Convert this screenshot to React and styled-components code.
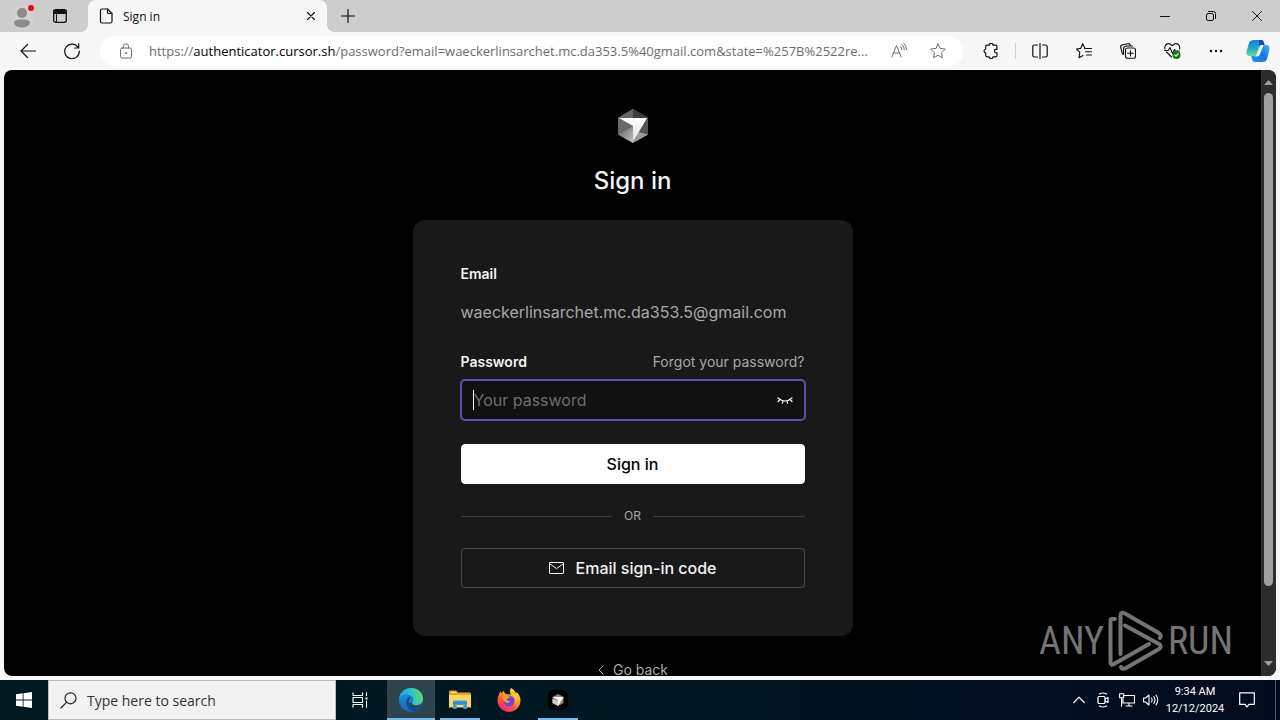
import React from "react";
import styled, { createGlobalStyle } from "styled-components";

const GlobalStyle = createGlobalStyle`
  * {
    box-sizing: border-box;
  }

  body {
    margin: 0;
    overflow: hidden;
  }

  button {
    padding: 0;
    border: 0;
    background: none;
    color: inherit;
    font: inherit;
  }

  svg {
    display: block;
    flex: none;
  }
`;

const Desktop = styled.div`
  height: 100vh;
  display: flex;
  flex-direction: column;
  background: #f7f7f7;
  font-family: "Open Sans", "Noto Sans", sans-serif;
`;

/* browser chrome */

const TabStrip = styled.header`
  height: 32px;
  flex: none;
  display: flex;
  background: #cdcdcd;
  color: #111;
`;

const StripTools = styled.div`
  width: 88px;
  display: flex;
  align-items: center;
  gap: 8px;
  padding-left: 7px;
`;

const StripButton = styled.button`
  width: 30px;
  height: 32px;
  display: flex;
  align-items: center;
  justify-content: center;
`;

const Tab = styled.div`
  position: relative;
  width: 239px;
  display: flex;
  align-items: center;
  gap: 10px;
  padding: 0 0 0 11px;
  background: #f7f7f7;
  border-radius: 8px 8px 0 0;
  font-size: 12px;

  &::before,
  &::after {
    content: "";
    position: absolute;
    bottom: 0;
    width: 8px;
    height: 8px;
  }

  &::before {
    left: -8px;
    background: radial-gradient(circle at 0 0, #cdcdcd 8px, #f7f7f7 8px);
  }

  &::after {
    right: -8px;
    background: radial-gradient(circle at 100% 0, #cdcdcd 8px, #f7f7f7 8px);
  }
`;

const TabTitle = styled.span`
  flex: 1;
`;

const NewTab = styled(StripButton)`
  margin-left: 6px;
`;

const WindowButtons = styled.div`
  margin-left: auto;
  display: flex;
`;

const WindowButton = styled(StripButton)`
  width: 46px;
`;

const Toolbar = styled.nav`
  height: 38px;
  flex: none;
  display: flex;
  align-items: center;
  gap: 12px;
  padding: 0 8px 0 12px;
  color: #111;
`;

const ToolButton = styled.button`
  width: ${(p) => (p.$narrow ? 28 : 32)}px;
  height: 32px;
  flex: none;
  display: flex;
  align-items: center;
  justify-content: center;
`;

const Separator = styled.div`
  width: 1px;
  height: 16px;
  margin: 0 -4px;
  background: #cfcfcf;
`;

const AddressBar = styled.div`
  flex: 1;
  min-width: 0;
  height: 30px;
  display: flex;
  align-items: center;
  padding: 0 9px 0 10px;
  border-radius: 15px;
  background: #fff;
  color: #6c6c6c;
`;

const Url = styled.div`
  flex: 1;
  min-width: 0;
  margin: 0 8px 0 7px;
  overflow: hidden;
  white-space: nowrap;
  font-size: 13px;
`;

const Host = styled.span`
  color: #000;
`;

const BarButton = styled(ToolButton)`
  margin-left: ${(p) => (p.$spaced ? 7 : 0)}px;
`;

/* page */

const Viewport = styled.div`
  flex: 1;
  min-height: 0;
  display: flex;
  margin: 0 4px 4px;
  border-radius: 8px;
  overflow: hidden;
  background: #000;
`;

const Page = styled.main`
  flex: 1;
  min-width: 0;
  overflow: hidden;
  display: flex;
  flex-direction: column;
  align-items: center;
  padding-top: 39px;
  color: #f4f4f4;
  font-family: Inter, sans-serif;
`;

const Title = styled.h1`
  flex: none;
  margin: 22px 0 23px;
  font-size: 24px;
  line-height: 32px;
  font-weight: 500;
`;

const Card = styled.form`
  width: 440px;
  max-width: 100%;
  flex: none;
  display: flex;
  flex-direction: column;
  padding: 44px 48px 48px;
  border-radius: 12px;
  background: #191919;
`;

const Label = styled.label`
  font-size: 14px;
  line-height: 20px;
  font-weight: 600;
  color: #f4f4f4;
`;

const EmailValue = styled.output`
  margin: 16px 0 28px;
  font-size: 16px;
  line-height: 24px;
  color: #a8a8a8;
`;

const LabelRow = styled.div`
  display: flex;
  justify-content: space-between;
`;

const MutedLink = styled.a`
  display: flex;
  align-items: center;
  gap: 8px;
  font-size: 14px;
  line-height: 20px;
  color: #a8a8a8;
  text-decoration: none;
`;

const Field = styled.div`
  height: 40px;
  display: flex;
  align-items: center;
  margin: 8px 0 24px;
  padding: 0 11px;
  border: 1px solid #5f4fae;
  border-radius: 4px;
  box-shadow: 0 0 0 1px #5f4fae;
  background: #111;
`;

const Caret = styled.span`
  width: 1px;
  height: 20px;
  background: #f4f4f4;
`;

const PasswordInput = styled.input`
  flex: 1;
  min-width: 0;
  height: 38px;
  padding: 0;
  border: 0;
  outline: 0;
  background: transparent;
  color: #f4f4f4;
  font: 16px Inter, sans-serif;

  &::placeholder {
    color: #6c6c6c;
    opacity: 1;
  }
`;

const ActionButton = styled.button`
  height: 40px;
  display: flex;
  align-items: center;
  justify-content: center;
  gap: 12px;
  border: 1px solid ${(p) => (p.$primary ? "#fff" : "#484848")};
  border-radius: 4px;
  background: ${(p) => (p.$primary ? "#fff" : "transparent")};
  color: ${(p) => (p.$primary ? "#000" : "#f4f4f4")};
  font-size: 16px;
  font-weight: 500;
`;

const Divider = styled.div`
  display: flex;
  align-items: center;
  gap: 12px;
  margin: 22px 0;
  font-size: 12px;
  line-height: 20px;
  color: #a8a8a8;

  &::before,
  &::after {
    content: "";
    flex: 1;
    height: 1px;
    background: #3a3a3a;
  }
`;

const GoBack = styled(MutedLink)`
  flex: none;
  margin-top: 24px;
`;

const Scrollbar = styled.div`
  width: 15px;
  display: flex;
  flex-direction: column;
  align-items: center;
  padding: 10px 0;
  background: #2c2c2c;
`;

const ScrollTrack = styled.div`
  flex: 1;
  padding: 8px 0;
`;

const Thumb = styled.div`
  width: 9px;
  height: 88%;
  border-radius: 5px;
  background: #9f9f9f;
`;

const Watermark = styled.div`
  position: absolute;
  right: 47px;
  bottom: 48px;
  display: flex;
  align-items: center;
  gap: 4px;
  color: #747474;
  font-family: "Roboto Condensed", "Liberation Sans Narrow", sans-serif;
  font-size: 38px;
  line-height: 62px;
`;

/* taskbar */

const Taskbar = styled.footer`
  height: 40px;
  flex: none;
  display: flex;
  background: linear-gradient(90deg, #001a22, #001722 45%, #020a1e);
  color: #fff;
`;

const TaskButton = styled.button`
  position: relative;
  width: 48px;
  display: flex;
  align-items: center;
  justify-content: center;
  background: ${(p) => (p.$active ? "#2f454d" : "transparent")};

  &::after {
    content: "";
    position: absolute;
    bottom: 0;
    width: ${(p) => (p.$active ? 48 : 40)}px;
    height: ${(p) => (p.$open ? 2 : 0)}px;
    background: #76b9ed;
  }
`;

const SearchBox = styled.label`
  width: 288px;
  display: flex;
  align-items: center;
  gap: 10px;
  padding-left: 11px;
  border: 1px solid #bcbcbc;
  background: #f2f2f2;
  color: #222;
`;

const SearchInput = styled.input`
  flex: 1;
  min-width: 0;
  padding: 0;
  border: 0;
  outline: 0;
  background: transparent;
  font: 14px "Open Sans", sans-serif;

  &::placeholder {
    color: #333;
    opacity: 1;
  }
`;

const Apps = styled.div`
  display: flex;
  gap: 1px;
  margin-left: 3px;
`;

const Tray = styled.div`
  margin-left: auto;
  display: flex;
`;

const TrayButton = styled.button`
  width: ${(p) => (p.$wide ? 40 : 24)}px;
  display: flex;
  align-items: center;
  justify-content: center;
`;

const Clock = styled.time`
  width: 64px;
  display: flex;
  flex-direction: column;
  align-items: center;
  justify-content: center;
  font: 11px/17px Roboto, sans-serif;
  white-space: nowrap;
`;

const ShowDesktop = styled.button`
  width: 5px;
  margin-left: 8px;
  border-left: 1px solid #4b5563;
`;

/* thin outline icon used by most of the chrome */
const Line = ({ w = 18, h = w, sw = 1, children }) => (
  <svg
    width={w}
    height={h}
    viewBox={`0 0 ${w} ${h}`}
    fill="none"
    stroke="currentColor"
    strokeWidth={sw}
    strokeLinecap="round"
    strokeLinejoin="round"
    aria-hidden="true"
  >
    {children}
  </svg>
);

const CubeIcon = () => (
  <svg width="30" height="34" viewBox="0 0 30 34" aria-hidden="true">
    <defs>
      <linearGradient id="cubeLeft" x1="0" y1="0" x2="1" y2="1">
        <stop offset="0" stopColor="#5a5a5a" />
        <stop offset="1" stopColor="#c5c5c5" />
      </linearGradient>
      <linearGradient id="cubeFace" x1="0" y1="0" x2="0" y2="1">
        <stop offset="0" stopColor="#fff" />
        <stop offset="1" stopColor="#ddd" />
      </linearGradient>
    </defs>
    <path d="M15 0 30 8.500v17L15 34 0 25.500V8.500z" fill="#555" />
    <path d="M15 0v9H0z" fill="#666" />
    <path d="M15 0v9h15z" fill="#3c3c3c" />
    <path d="M0 8.500 15 17 0 25.500z" fill="#6a6a6a" />
    <path d="M0 25.500 15 17v17z" fill="url(#cubeLeft)" />
    <path d="M30 8.500v17L20 26z" fill="#555" />
    <path d="M30 25.500 15 34l5-11z" fill="#9a9a9a" />
    <path d="M1 9h28L15 33V17z" fill="url(#cubeFace)" />
  </svg>
);

const CopilotIcon = () => (
  <svg width="24" height="24" viewBox="0 0 24 24" aria-hidden="true">
    <defs>
      <linearGradient id="copA" x1="0" y1="0" x2="0" y2="1">
        <stop offset="0" stopColor="#1782d8" />
        <stop offset=".5" stopColor="#18a9cf" />
        <stop offset="1" stopColor="#6bdc94" />
      </linearGradient>
      <linearGradient id="copB" x1="1" y1="0" x2="0" y2="1">
        <stop offset="0" stopColor="#2fc0f5" />
        <stop offset=".5" stopColor="#1a72e4" />
        <stop offset="1" stopColor="#1f9bf5" />
      </linearGradient>
    </defs>
    <path d="M8 1h7c2 0 2.500 1 3 3l.5 2H16c-2 0-3 1-3.500 3l-1.500 5c-.6 2-1.500 3-3.500 3H4c-3 0-4-2-3.300-5l2-7C3.500 2 5 1 8 1z" fill="url(#copA)" />
    <path d="M13 1h2c2 0 2.500 1 3 3l.5 2H16l-3 1z" fill="#174ea6" />
    <path d="M16 23H9c-2 0-2.500-1-3-3l-.7-3H8c2 0 3-1 3.500-3L13 9c.6-2 1.500-3 3.500-3H20c3 0 4 2 3.300 5l-2 8c-.8 3-2.300 4-5.300 4z" fill="url(#copB)" />
    <path d="M14 7c1-1 2-1 3.500-1L14 15c-.8 2-2 2.500-4 2.500H8c2 0 3-1.500 3.500-3.500z" fill="#fff" />
  </svg>
);

const EdgeIcon = () => (
  <svg width="24" height="24" viewBox="0 0 24 24" aria-hidden="true">
    <defs>
      <linearGradient id="edgeTop" x1="0" y1=".5" x2="1" y2=".4">
        <stop offset="0" stopColor="#219bdc" />
        <stop offset=".5" stopColor="#2cbfd3" />
        <stop offset="1" stopColor="#63dc62" />
      </linearGradient>
      <linearGradient id="edgeLow" x1="0" y1="0" x2="0" y2="1">
        <stop offset="0" stopColor="#1b9de2" />
        <stop offset="1" stopColor="#1765b8" />
      </linearGradient>
    </defs>
    <circle cx="12" cy="12" r="12" fill="url(#edgeLow)" />
    <path d="M0 11C.8 4.500 6 0 12 0c7 0 12 5 12 10.500 0 4-3 6.500-6.500 6.500-3 0-4.500-1-4.500-2 0-.7 1.300-1.400 1.300-3.400C14.300 8.500 11 6.500 7.500 6.500 4 6.500 1.500 8 0 11z" fill="url(#edgeTop)" />
    <path d="M11 8c-3 1.500-4.300 4.500-3.700 8 .7 4 4.200 7.500 8.700 7.200 2.500-1 4.700-2.700 6-5-2 1-4 1.300-6 1-4-.5-6.500-3.200-6.200-6.200.1-1 .8-2 1.800-2.700z" fill="#124f92" />
    <path d="M13.200 14.500c-.8 1.700 1 3 4 3 2.300 0 4.300-.8 5.500-2.200.8.7.3 1.700-.7 2.900-4 3-10.500 1.800-11.600-3z" fill="#2f454d" />
  </svg>
);

const FolderIcon = () => (
  <svg width="22" height="20" viewBox="0 0 22 20" aria-hidden="true">
    <path d="M0 2c0-1 .4-1.500 1.500-1.500H7l2 2h11.500c1 0 1.500.5 1.500 1.500v3H0z" fill="#e9a520" />
    <path d="M0 5h22v12.500H0z" fill="#ffd768" />
    <path d="M2 2.500h4.500" stroke="#fff0bd" />
    <path d="M4 19v-7c0-1 .5-1.500 1.500-1.500h11c1 0 1.500.5 1.500 1.500v7h-3.500v-4h-7v4z" fill="#3d9bdb" />
    <path d="M4 13h14" stroke="#287bbd" />
  </svg>
);

const FirefoxIcon = () => (
  <svg width="24" height="24" viewBox="0 0 24 24" aria-hidden="true">
    <defs>
      <linearGradient id="fox" x1=".85" y1="0" x2=".2" y2="1">
        <stop offset="0" stopColor="#fff04a" />
        <stop offset=".35" stopColor="#ffaa20" />
        <stop offset=".65" stopColor="#ff5a36" />
        <stop offset="1" stopColor="#e7188a" />
      </linearGradient>
    </defs>
    <path d="M14 0c3 1.500 4.500 4 5 5.500.6-.2.500-1 .3-2C22 6 23.500 9 23.500 12.500 23.500 19 18 24 12 24S.5 19 .5 12.500C.5 9 2 6 3.500 3c.2 1 .5 1.800 1 2.300C5.500 4 6 3.500 7 2.800c0 1.500.7 2.500 2 3.200l5 .5C12.500 4.500 12.500 2 14 0z" fill="url(#fox)" />
    <circle cx="12" cy="13" r="5.500" fill="#7140d8" />
    <path d="M5 8c2-1.500 4-1.300 5.500 0l2.500.4c-.5 1.600-3.200 1.600-3.500 3.100.9 1.500 2.300 2 4 1.300-.8 2-3.500 2.700-5.500 1.200C6 12.500 5 10 5 8z" fill="#ff9c26" />
    <path d="M14 6c3.500 1 5.500 5 4 9 1.300-1 2-3 1.700-5.500C19 6.500 16 5 14 6z" fill="#ffd33c" />
  </svg>
);

const CursorAppIcon = () => (
  <svg width="20" height="20" viewBox="0 0 20 20" aria-hidden="true">
    <rect width="20" height="20" rx="5" fill="#000" />
    <path d="M10 4l5.500 3v6L10 16l-5.500-3V7z" fill="#888" />
    <path d="M4.500 7h11L10 16v-6z" fill="#fff" />
    <path d="M4.500 9 10 11v5l-5.500-3z" fill="#c9c9c9" />
  </svg>
);

const PlayLogo = () => (
  <svg
    width="56"
    height="62"
    viewBox="0 0 56 62"
    fill="none"
    stroke="currentColor"
    strokeWidth="4"
    strokeLinejoin="round"
    strokeLinecap="round"
    aria-hidden="true"
  >
    <path d="M7 9H4Q2.500 9 2.500 11V53Q3 56 6 54L41 34" />
    <path d="M12.500 44V6Q12.500 1 17 3.500L50 22.500Q54 25 52 28" />
    <path d="M17 15.500 51 34Q54.500 36.500 51 39L18 58Q14 60 13 57" />
  </svg>
);

export default function App() {
  return (
    <>
      <GlobalStyle />
      <Desktop>
        <TabStrip>
          <StripTools>
            <StripButton aria-label="Profile">
              <svg width="26" height="28" viewBox="0 0 26 28" aria-hidden="true">
                <circle cx="13" cy="15" r="12" fill="#d3d0ce" />
                <circle cx="13" cy="11" r="5" fill="#8b8b8b" />
                <path d="M5 21c0-2 2-3.500 8-3.500s8 1.500 8 3.500c-1 3-4 4.500-8 4.500S6 24 5 21z" fill="#8b8b8b" />
                <circle cx="22" cy="6" r="3" fill="#e00b1c" />
              </svg>
            </StripButton>
            <StripButton aria-label="Workspaces">
              <Line w={14}>
                <rect x=".7" y=".7" width="12.600" height="12.600" rx="2" strokeWidth="1.300" />
                <path d="M1 1.500h12v3H1z" fill="currentColor" />
                <path d="M3.500 4.500v8.500" />
              </Line>
            </StripButton>
          </StripTools>
          <Tab>
            <Line w={14} h={16} sw={1.2}>
              <path d="M3 1h5.500L13 5.500V13.500q0 1.500-1.500 1.500H3q-1.500 0-1.500-1.500v-11Q1.500 1 3 1z" />
              <path d="M8.500 1v3.500q0 1 1 1H13" />
            </Line>
            <TabTitle>Sign in</TabTitle>
            <ToolButton aria-label="Close tab">
              <Line w={8} sw={1.2}>
                <path d="M.5.5l7 7M7.500.5l-7 7" />
              </Line>
            </ToolButton>
          </Tab>
          <NewTab aria-label="New tab">
            <Line w={14} sw={1.2}>
              <path d="M7 .5v13M.5 7h13" />
            </Line>
          </NewTab>
          <WindowButtons>
            <WindowButton aria-label="Minimize">
              <Line w={10}>
                <path d="M.5 5.500h9" />
              </Line>
            </WindowButton>
            <WindowButton aria-label="Restore">
              <Line w={10}>
                <rect x=".5" y="2.500" width="7" height="7" rx="1.500" />
                <path d="M2.500.5H7.500q2 0 2 2V7.500" />
              </Line>
            </WindowButton>
            <WindowButton aria-label="Close">
              <Line w={10}>
                <path d="M.5.5l9 9M9.500.5l-9 9" />
              </Line>
            </WindowButton>
          </WindowButtons>
        </TabStrip>

        <Toolbar>
          <ToolButton aria-label="Back">
            <Line w={16} sw={1.2}>
              <path d="M15.500 8H1M7.500 1.500 1 8l6.500 6.500" />
            </Line>
          </ToolButton>
          <ToolButton aria-label="Refresh">
            <Line w={16} sw={1.2}>
              <path d="M14.200 4.500A7.300 7.300 0 1 0 15.300 8M14.700.8v4.200h-4.200" />
            </Line>
          </ToolButton>
          <AddressBar>
            <ToolButton aria-label="Site information">
              <Line w={12} h={16}>
                <rect x=".5" y="5" width="11" height="10" rx="1.500" />
                <path d="M3.500 5V3.200a2.500 2.500 0 0 1 5 0V5" />
                <circle cx="6" cy="10" r=".6" fill="currentColor" />
              </Line>
            </ToolButton>
            <Url role="textbox" aria-label="Address" tabIndex={0}>
              https://<Host>authenticator.cursor.sh</Host>
              /password?email=waeckerlinsarchet.mc.da353.5%40gmail.com&amp;state=%257B%2522re...
            </Url>
            <BarButton aria-label="Read aloud">
              <Line w={16}>
                <path d="M.8 14 5.500 2.500 10.200 14M2.400 10h6.200M9.500 3.500q1.300 1.300 1.300 3.500M11 1.500q2.500 2 2.300 5.500M13 .5q2.500 2.500 2.500 6" />
              </Line>
            </BarButton>
            <BarButton $spaced aria-label="Add to favorites">
              <Line w={16}>
                <path d="M8 .8l2.200 4.600 5 .7-3.600 3.600.8 5L8 12.300l-4.400 2.400.8-5L.8 6.100l5-.7z" />
              </Line>
            </BarButton>
          </AddressBar>
          <ToolButton aria-label="Extensions">
            <Line w={16} sw={1.2}>
              <path d="M4 2.200h2.200a1.900 1.900 0 0 1 3.800 0h2.500q1.500 0 1.500 1.500v2.600h-.8a1.800 1.800 0 0 0 0 3.600h.8v2.400q0 1.500-1.500 1.500H10a1.900 1.900 0 0 1-3.800 0H4q-1.300 0-1.300-1.500v-2.200a2.100 2.100 0 0 1 0-4.100V3.700q0-1.500 1.300-1.500z" />
            </Line>
          </ToolButton>
          <Separator />
          <ToolButton aria-label="Split screen">
            <Line w={16} sw={1.2}>
              <path d="M5.500 2H2.500Q.8 2 .8 3.700v8.600Q.8 14 2.500 14h3M10.500 2h3q1.700 0 1.700 1.700v8.600q0 1.700-1.700 1.700h-3M8 .6v14.800" />
            </Line>
          </ToolButton>
          <ToolButton aria-label="Favorites">
            <Line w={16} sw={1.1}>
              <path d="M9 5.200 6.700.8 4.600 5.400.6 6l3.200 3.400L3 14.700 7 12.500M8.500 5.500h7M9.500 8.700h6M10.500 12h5" />
            </Line>
          </ToolButton>
          <ToolButton aria-label="Collections">
            <Line w={16} sw={1.1}>
              <rect x="5.500" y="5" width="10" height="10.300" rx="2" />
              <path d="M10.500 7.500v5.500M7.700 10.200h5.600M3.500 11.500Q2.500 11 2 9.500L.7 4q-.3-1.500 1-2L8 .7q1.500-.2 2 1l.5 1.300M3.500 11V6q0-3 3-3h6" />
            </Line>
          </ToolButton>
          <ToolButton aria-label="Browser essentials">
            <Line w={17} h={16} sw={1.1}>
              <path d="M1 6C0 2.500 3-.2 6 1l2.300 1.700L10.500 1c3-1.200 6 1.500 5 5M2.500 9l5 5M.7 7.500h3.500L6 4.500l2.500 6 2-4 1 1.500h4" />
              <circle cx="12.500" cy="12" r="4" fill="#107c10" stroke="none" />
              <path d="M10.800 12l1.200 1.200 2.200-2.300" stroke="#fff" />
            </Line>
          </ToolButton>
          <ToolButton aria-label="Settings and more">
            <svg width="14" height="4" fill="currentColor" aria-hidden="true">
              <circle cx="2" cy="2" r="1.200" />
              <circle cx="7" cy="2" r="1.200" />
              <circle cx="12" cy="2" r="1.200" />
            </svg>
          </ToolButton>
          <ToolButton $narrow aria-label="Copilot">
            <CopilotIcon />
          </ToolButton>
        </Toolbar>

        <Viewport>
          <Page>
            <CubeIcon />
            <Title>Sign in</Title>
            <Card onSubmit={(e) => e.preventDefault()}>
              <Label htmlFor="email">Email</Label>
              <EmailValue id="email">waeckerlinsarchet.mc.da353.5@gmail.com</EmailValue>
              <LabelRow>
                <Label htmlFor="password">Password</Label>
                <MutedLink href="#forgot">Forgot your password?</MutedLink>
              </LabelRow>
              <Field>
                <Caret />
                <PasswordInput id="password" type="password" placeholder="Your password" />
                <button type="button" aria-label="Show password">
                  <Line w={16} h={8} sw={1.2}>
                    <path d="M1 2Q8 8 15 2M3 3.500 1 5.500M6 5l-.7 2.300M10 5l.7 2.300M13 3.500l2 2" />
                  </Line>
                </button>
              </Field>
              <ActionButton $primary type="submit">
                Sign in
              </ActionButton>
              <Divider>OR</Divider>
              <ActionButton type="button">
                <Line w={15} h={12}>
                  <rect x=".5" y=".5" width="14" height="11" rx=".5" />
                  <path d="M1 2l6.500 4.500L14 2" />
                </Line>
                Email sign-in code
              </ActionButton>
            </Card>
            <GoBack href="#back">
              <Line w={8} h={10}>
                <path d="M6 1 2 5l4 4" />
              </Line>
              Go back
            </GoBack>
          </Page>
          <Scrollbar>
            <svg width="9" height="5" fill="#9f9f9f" aria-hidden="true">
              <path d="M4.500 0 9 5H0z" />
            </svg>
            <ScrollTrack>
              <Thumb />
            </ScrollTrack>
            <svg width="9" height="5" fill="#9f9f9f" aria-hidden="true">
              <path d="M4.500 5 9 0H0z" />
            </svg>
          </Scrollbar>
        </Viewport>

        <Taskbar>
          <TaskButton aria-label="Start">
            <svg width="16" height="16" fill="#fff" aria-hidden="true">
              <path d="M0 2.300 6.700 1.300v6.300H0zM7.500 1.200 16 0v7.600H7.500zM0 8.400h6.700v6.300L0 13.700zM7.500 8.400H16V16l-8.500-1.200z" />
            </svg>
          </TaskButton>
          <SearchBox>
            <Line w={17} sw={1.2}>
              <circle cx="10.500" cy="6.300" r="5.500" />
              <path d="M6.500 10.300.8 16" />
            </Line>
            <SearchInput aria-label="Search" placeholder="Type here to search" />
          </SearchBox>
          <TaskButton aria-label="Task view">
            <Line w={16} sw={1.1}>
              <path d="M1 .8v2.700h9.500V.8M1 15.200v-2.700h9.500v2.700M1 5.500h9.500v5H1zM14.500.8v3M14.500 9v6.200" />
              <path d="M13.500 5.500h2v2h-2z" fill="currentColor" stroke="none" />
            </Line>
          </TaskButton>
          <Apps>
            <TaskButton $active $open aria-label="Microsoft Edge">
              <EdgeIcon />
            </TaskButton>
            <TaskButton $open aria-label="File Explorer">
              <FolderIcon />
            </TaskButton>
            <TaskButton aria-label="Firefox">
              <FirefoxIcon />
            </TaskButton>
            <TaskButton $open aria-label="Cursor">
              <CursorAppIcon />
            </TaskButton>
          </Apps>
          <Tray>
            <TrayButton aria-label="Show hidden icons">
              <Line w={12} h={8} sw={1.2}>
                <path d="M.8 6.500 6 1.200l5.200 5.300" />
              </Line>
            </TrayButton>
            <TrayButton aria-label="Meet now">
              <Line w={12} h={16} sw={1.2}>
                <rect x="1" y="4.500" width="7" height="7" rx="1" />
                <path d="M8 7l3-1.500v5L8 9M2.500 2q3.500-2 7 0M2.500 14q3.500 2 7 0" />
              </Line>
            </TrayButton>
            <TrayButton aria-label="Network">
              <Line w={16} h={14} sw={1.1}>
                <path d="M5.500 2.500h10v7.500H4V6M7 13h6M10 10v3M.6.8h4v4h-4zM2.600 4.800v8.400" />
              </Line>
            </TrayButton>
            <TrayButton aria-label="Volume">
              <Line w={16} h={12} sw={1.1}>
                <path d="M.6 4h2L6 1v10L2.600 8h-2zM8.500 4q1.300 2 0 4M10.800 2.500q2.400 3.500 0 7M13 1q3.500 5 0 10" />
              </Line>
            </TrayButton>
            <Clock dateTime="2024-12-12T09:34">
              <span>9:34 AM</span>
              <span>12/12/2024</span>
            </Clock>
            <TrayButton $wide aria-label="Notifications">
              <Line w={16} sw={1.2}>
                <path d="M.7.8h14.600v11.500H10l-2 2.500-2-2.500H.7z" />
              </Line>
            </TrayButton>
            <ShowDesktop aria-label="Show desktop" />
          </Tray>
        </Taskbar>
        <Watermark>
          <span>ANY</span>
          <PlayLogo />
          <span>RUN</span>
        </Watermark>
      </Desktop>
    </>
  );
}
